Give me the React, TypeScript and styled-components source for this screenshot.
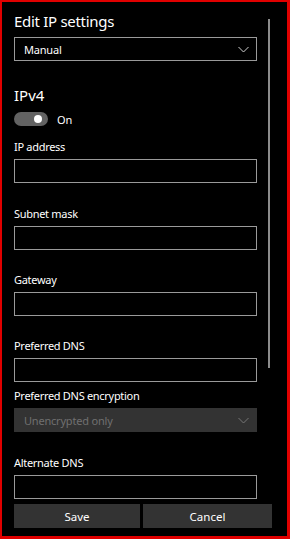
import React from 'react';
import styled, {createGlobalStyle} from 'styled-components';

const GlobalStyle = createGlobalStyle`
  html, body {
    margin: 0;
    padding: 0;
    background: #000;
  }
  body {
    font-family: "Noto Sans", "Open Sans", sans-serif;
    color: #fff;
  }
`;

const Frame = styled.div`
  position: relative;
  width: 290px;
  height: 539px;
  box-sizing: border-box;
  background: #000;
  border-style: solid;
  border-color: #e00000;
  border-width: 2px 3px 3px 2px;
  padding: 0 0 0 12px;
  display: flex;
  flex-direction: column;
`;

const Title = styled.h1`
  margin: 0;
  padding-top: 9px;
  height: 35px;
  box-sizing: border-box;
  font-size: 15px;
  font-weight: 400;
  line-height: 20px;
  letter-spacing: -0.3px;
`;

const Select = styled.div<{disabled?: boolean}>`
  width: 243px;
  height: 24px;
  box-sizing: border-box;
  display: flex;
  align-items: center;
  justify-content: space-between;
  padding: 0 7px 0 9px;
  font-size: 11px;
  letter-spacing: -0.2px;
  border: 1px solid ${p => (p.disabled ? '#333' : '#9a9a9a')};
  background: ${p => (p.disabled ? '#333' : 'transparent')};
  color: ${p => (p.disabled ? '#707070' : '#fff')};
`;

const Heading = styled.h2`
  margin: 0;
  padding-top: 24px;
  height: 48px;
  box-sizing: border-box;
  font-size: 15px;
  font-weight: 400;
  line-height: 20px;
`;

const ToggleRow = styled.div`
  display: flex;
  align-items: center;
  gap: 9px;
  height: 14px;
  font-size: 11px;
  margin-top: 3px;
`;

const Track = styled.span`
  position: relative;
  width: 34px;
  height: 14px;
  border-radius: 7px;
  background: #626262;
`;

const Knob = styled.span`
  position: absolute;
  top: 3px;
  right: 6px;
  width: 8px;
  height: 8px;
  border-radius: 50%;
  background: #fff;
`;

const Field = styled.div<{$gap: number}>`
  margin-top: ${p => p.$gap}px;
  display: flex;
  flex-direction: column;
`;

const Label = styled.label`
  font-size: 11px;
  line-height: 16px;
  height: 16px;
  margin-bottom: 4px;
  letter-spacing: -0.3px;
`;

const Input = styled.div`
  width: 243px;
  height: 24px;
  box-sizing: border-box;
  border: 1px solid #9a9a9a;
`;

const Buttons = styled.div`
  display: grid;
  grid-template-columns: 126px 129px;
  gap: 3px;
  margin-top: 5px;
`;

const Button = styled.button`
  height: 24px;
  border: none;
  background: #333;
  color: #fff;
  font-family: inherit;
  font-size: 11.5px;
  padding: 0;
`;

const ScrollBar = styled.div`
  position: absolute;
  left: 266px;
  top: 17px;
  width: 2px;
  height: 349px;
  background: #8c8c8c;
`;

function Chevron({color}: {color: string}) {
  return (
    <svg width="11" height="7" viewBox="0 0 11 7">
      <polyline points="0.5,1 5.5,6 10.5,1" fill="none" stroke={color} strokeWidth="1"/>
    </svg>
  );
}

const fields = [
  {label: 'IP address', gap: 13},
  {label: 'Subnet mask', gap: 23},
  {label: 'Gateway', gap: 22},
  {label: 'Preferred DNS', gap: 22},
];

export default function App() {
  return (
    <>
      <GlobalStyle/>
      <Frame>
        <Title>Edit IP settings</Title>
        <Select>
          <span>Manual</span>
          <Chevron color="#cfcfcf"/>
        </Select>
        <Heading>IPv4</Heading>
        <ToggleRow>
          <Track><Knob/></Track>
          <span>On</span>
        </ToggleRow>
        {fields.map(f =>
          <Field key={f.label} $gap={f.gap}>
            <Label>{f.label}</Label>
            <Input/>
          </Field>
        )}
        <Field $gap={6}>
          <Label>Preferred DNS encryption</Label>
          <Select disabled>
            <span>Unencrypted only</span>
            <Chevron color="#777"/>
          </Select>
        </Field>
        <Field $gap={23}>
          <Label>Alternate DNS</Label>
          <Input/>
        </Field>
        <Buttons>
          <Button>Save</Button>
          <Button>Cancel</Button>
        </Buttons>
        <ScrollBar/>
      </Frame>
    </>
  );
}
